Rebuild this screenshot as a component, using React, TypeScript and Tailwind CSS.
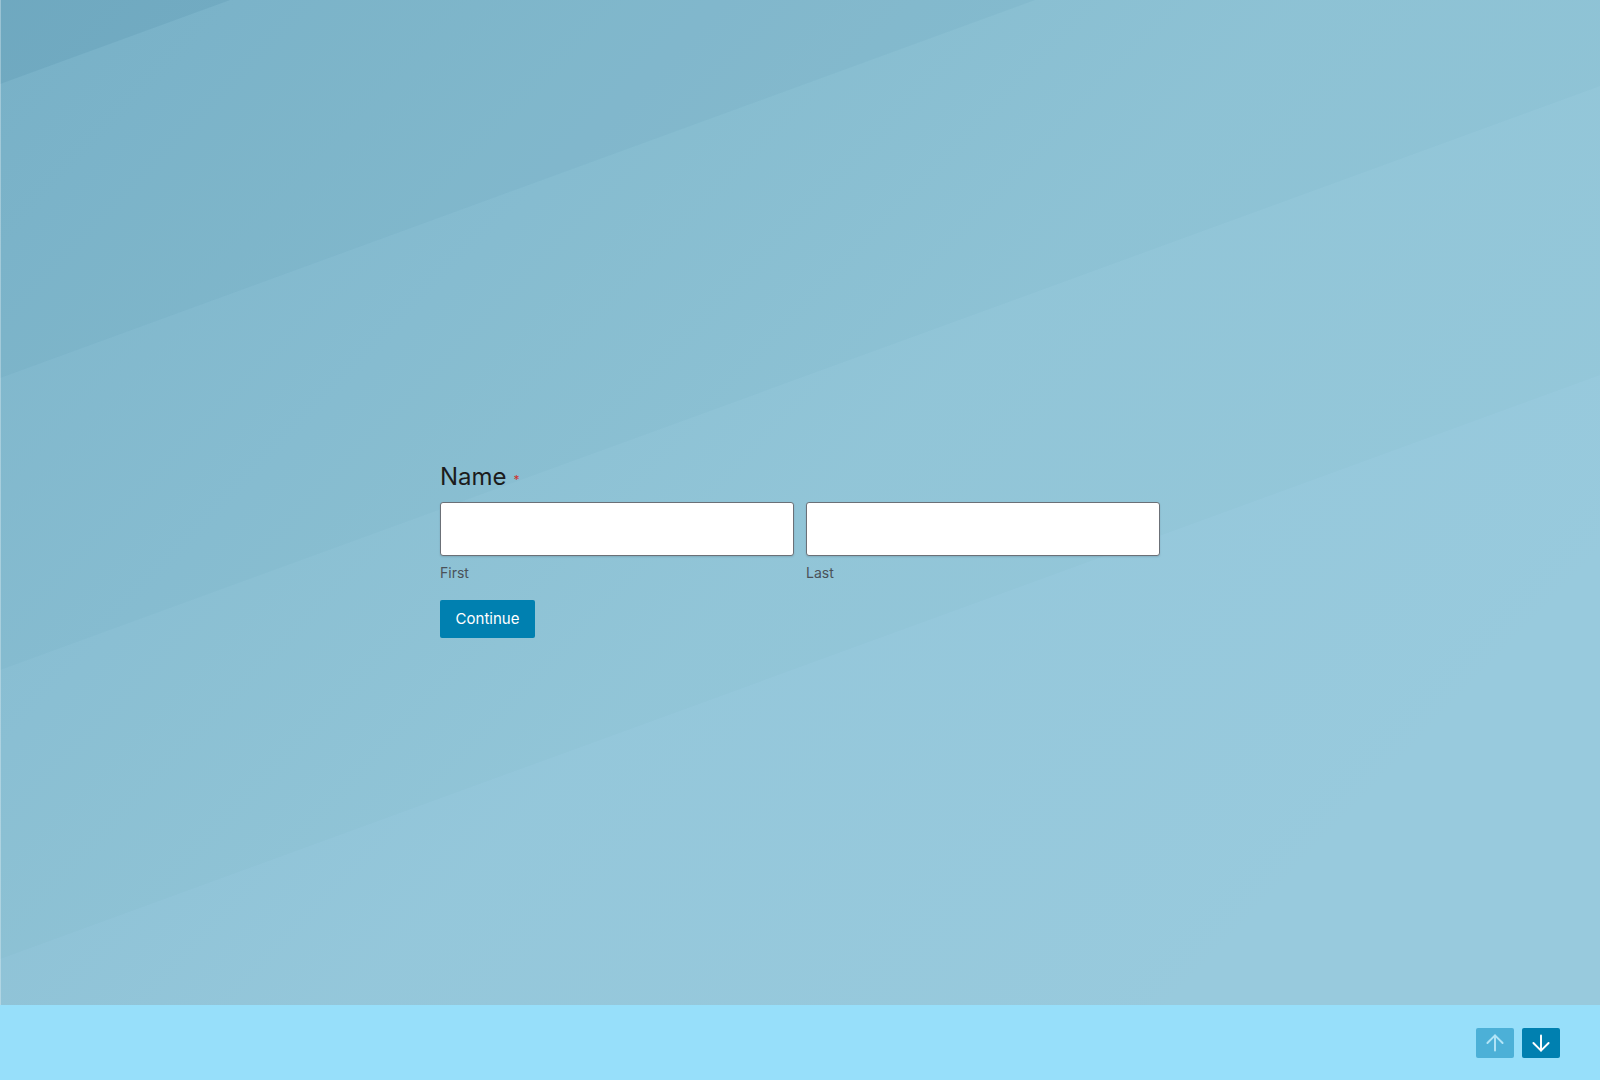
import { ArrowUp, ArrowDown } from "lucide-react";

function Backdrop() {
  // decorative diagonal bands behind the form
  return (
    <svg
      className="absolute inset-0 h-full w-full"
      viewBox="0 0 1600 1005"
      preserveAspectRatio="none"
    >
      <defs>
        <linearGradient id="fade" x1="0" y1="0" x2="1" y2="0.6">
          <stop offset="0" stopColor="#3d7f9c" stopOpacity="0.22" />
          <stop offset="0.6" stopColor="#3d7f9c" stopOpacity="0.04" />
          <stop offset="1" stopColor="#3d7f9c" stopOpacity="0" />
        </linearGradient>
      </defs>
      <rect width="1600" height="1005" fill="#98cadd" />
      <rect width="1600" height="1005" fill="url(#fade)" />
      <polygon points="0,0 1600,0 1600,375 0,959" fill="#2f7391" fillOpacity="0.025" />
      <polygon points="0,0 1600,0 1600,86 0,670" fill="#2f7391" fillOpacity="0.04" />
      <polygon points="0,0 1035,0 0,378" fill="#2f7391" fillOpacity="0.06" />
      <polygon points="0,0 230,0 0,84" fill="#2f7391" fillOpacity="0.12" />
      <rect width="1" height="1005" fill="#ffffff" fillOpacity="0.3" />
    </svg>
  );
}

export default function App() {
  return (
    <div
      className="flex h-[1080px] w-[1600px] flex-col overflow-hidden"
      style={{ fontFamily: "Inter, 'Noto Sans', sans-serif" }}
    >
      {/* Form area */}
      <div className="relative h-[1005px]">
        <Backdrop />
        <div className="relative mx-auto w-[720px] pt-[461px]">
          <div className="flex items-start">
            <h2 className="text-[24px] leading-[32px] text-[#1c1c1c]">Name</h2>
            <span className="ml-[7px] mt-[11px] text-[12px] leading-[16px] text-[#d0312d]">*</span>
          </div>

          <div className="mt-[9px] grid grid-cols-2 gap-[12px]">
            <div>
              <input
                type="text"
                className="h-[54px] w-full rounded-[3px] border border-[#6b7077] bg-white px-3 shadow-[0_1px_2px_rgba(0,0,0,0.12)] outline-none"
              />
              <p className="mt-[7px] text-[14px] leading-[20px] text-[#4a5259]">First</p>
            </div>
            <div>
              <input
                type="text"
                className="h-[54px] w-full rounded-[3px] border border-[#6b7077] bg-white px-3 shadow-[0_1px_2px_rgba(0,0,0,0.12)] outline-none"
              />
              <p className="mt-[7px] text-[14px] leading-[20px] text-[#4a5259]">Last</p>
            </div>
          </div>

          <button className="mt-[17px] h-[38px] w-[95px] rounded-[2px] bg-[#0080b0] text-[15px] font-normal text-white">
            Continue
          </button>
        </div>
      </div>

      {/* Footer nav */}
      <div className="flex h-[75px] items-center justify-end gap-[8px] bg-[#97dffa] pr-[40px]">
        <button className="flex h-[30px] w-[38px] items-center justify-center rounded-[2px] bg-[#4cb0d7] text-[#b3e5f7]">
          <ArrowUp size={26} strokeWidth={1.8} />
        </button>
        <button className="flex h-[30px] w-[38px] items-center justify-center rounded-[2px] bg-[#0080b0] text-white">
          <ArrowDown size={26} strokeWidth={1.8} />
        </button>
      </div>
    </div>
  );
}
